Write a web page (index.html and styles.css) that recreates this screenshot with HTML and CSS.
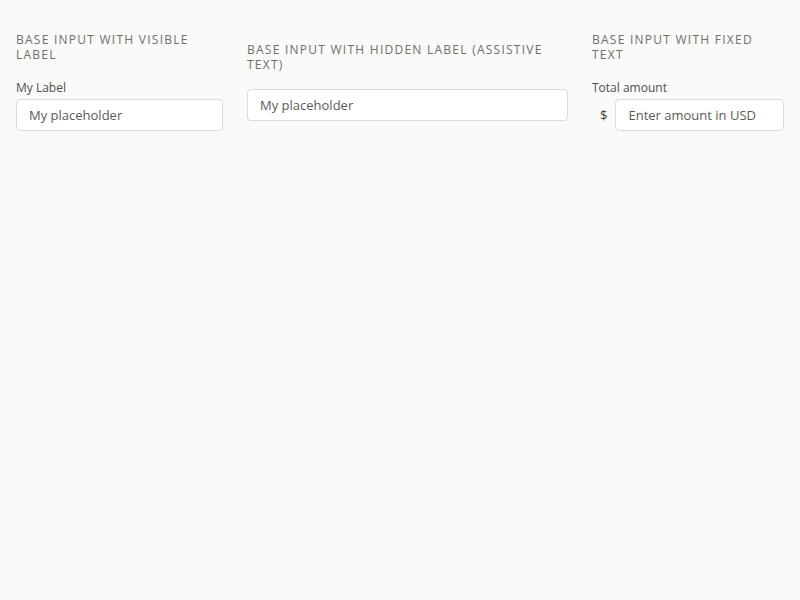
FILE: index.html
```html
<!DOCTYPE html>
<html lang="en">
<head>
<meta charset="utf-8">
<title>Base input</title>
<link rel="stylesheet" href="styles.css">
</head>
<body>
<div class="row">
  <div class="col col-1">
    <h2 class="title">Base input with visible label</h2>
    <div class="field">
      <label class="label" for="i1">My Label</label>
      <input class="input" id="i1" type="text" placeholder="My placeholder">
    </div>
  </div>
  <div class="col col-2">
    <h2 class="title">Base input with hidden label (assistive text)</h2>
    <div class="field">
      <input class="input" type="text" placeholder="My placeholder" aria-label="My Label">
    </div>
  </div>
  <div class="col col-3">
    <h2 class="title">Base input with fixed text</h2>
    <div class="field">
      <label class="label" for="i3">Total amount</label>
      <div class="addon-wrap">
        <span class="addon">$</span>
        <input class="input" id="i3" type="text" placeholder="Enter amount in USD">
      </div>
    </div>
  </div>
</div>
</body>
</html>
```
FILE: styles.css
```css
html, body {
  margin: 0;
  padding: 0;
  background: #fafaf9;
  font-family: "Open Sans", "Noto Sans", sans-serif;
  color: #3e3e3c;
}
.row {
  display: flex;
  align-items: center;
  gap: 24px;
  padding: 32px 16px 0;
}
.col-1 { width: 207px; }
.col-2 { width: 321px; }
.col-3 { width: 192px; }
.title {
  margin: 0 0 17px;
  font-size: 12px;
  font-weight: 400;
  line-height: 15px;
  letter-spacing: 1.25px;
  text-transform: uppercase;
  color: #706e6b;
}
.label {
  display: block;
  font-size: 12px;
  line-height: 18px;
  color: #514f4d;
  margin-bottom: 2px;
}
.input {
  box-sizing: border-box;
  display: block;
  width: 100%;
  height: 32px;
  margin: 0;
  padding: 0 12px;
  border: 1px solid #dddbda;
  border-radius: 4px;
  background: #fff;
  font-family: inherit;
  font-size: 13px;
  color: #3e3e3c;
}
.input::placeholder {
  color: #5c5a58;
  opacity: 1;
}
.addon-wrap {
  display: flex;
  align-items: center;
}
.addon {
  margin: 0 8px;
  font-size: 13px;
  color: #3e3e3c;
}
.addon-wrap .input {
  flex: 1;
  width: auto;
  min-width: 0;
}
```
